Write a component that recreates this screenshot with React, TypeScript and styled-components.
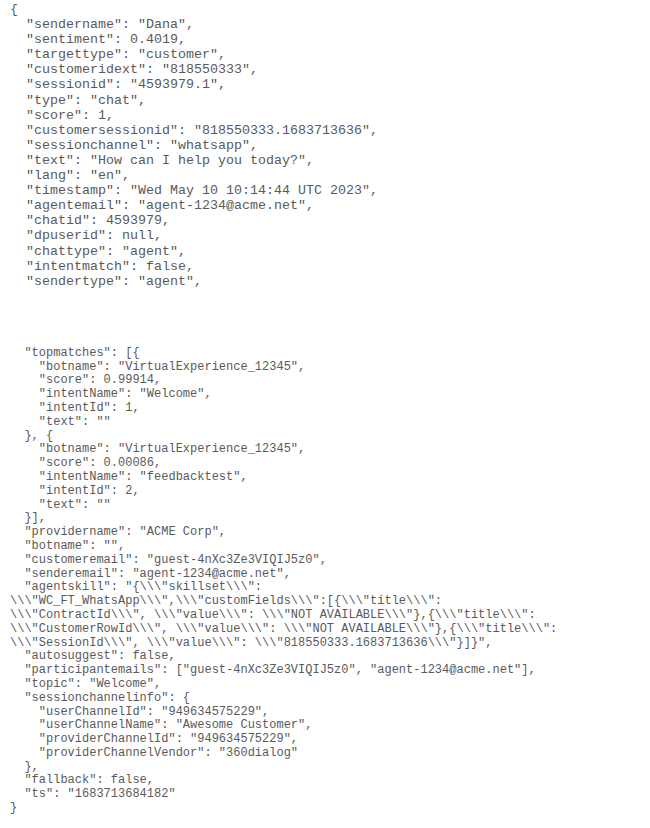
import React from "react";
import styled, { createGlobalStyle } from "styled-components";

const Global = createGlobalStyle`
  html, body { margin: 0; padding: 0; background: #ffffff; }
`;

const Page = styled.main`
  display: flex;
  flex-direction: column;
  padding: 2px 0 0 10px;
`;

const Code = styled.pre<{ $size: number; $lh: number; $gap?: number }>`
  margin: ${(p) => p.$gap ?? 0}px 0 0 0;
  font-family: "Liberation Mono", "Courier New", monospace;
  font-size: ${(p) => p.$size}px;
  line-height: ${(p) => p.$lh}px;
  color: #5a5a5a;
  white-space: pre;
`;

const head = `{
  "sendername": "Dana",
  "sentiment": 0.4019,
  "targettype": "customer",
  "customeridext": "818550333",
  "sessionid": "4593979.1",
  "type": "chat",
  "score": 1,
  "customersessionid": "818550333.1683713636",
  "sessionchannel": "whatsapp",
  "text": "How can I help you today?",
  "lang": "en",
  "timestamp": "Wed May 10 10:14:44 UTC 2023",
  "agentemail": "agent-1234@acme.net",
  "chatid": 4593979,
  "dpuserid": null,
  "chattype": "agent",
  "intentmatch": false,
  "sendertype": "agent",`;

const tail = `  "topmatches": [{
    "botname": "VirtualExperience_12345",
    "score": 0.99914,
    "intentName": "Welcome",
    "intentId": 1,
    "text": ""
  }, {
    "botname": "VirtualExperience_12345",
    "score": 0.00086,
    "intentName": "feedbacktest",
    "intentId": 2,
    "text": ""
  }],
  "providername": "ACME Corp",
  "botname": "",
  "customeremail": "guest-4nXc3Ze3VIQIJ5z0",
  "senderemail": "agent-1234@acme.net",
  "agentskill": "{\\\\\\"skillset\\\\\\":
\\\\\\"WC_FT_WhatsApp\\\\\\",\\\\\\"customFields\\\\\\":[{\\\\\\"title\\\\\\":
\\\\\\"ContractId\\\\\\", \\\\\\"value\\\\\\": \\\\\\"NOT AVAILABLE\\\\\\"},{\\\\\\"title\\\\\\":
\\\\\\"CustomerRowId\\\\\\", \\\\\\"value\\\\\\": \\\\\\"NOT AVAILABLE\\\\\\"},{\\\\\\"title\\\\\\":
\\\\\\"SessionId\\\\\\", \\\\\\"value\\\\\\": \\\\\\"818550333.1683713636\\\\\\"}]}",
  "autosuggest": false,
  "participantemails": ["guest-4nXc3Ze3VIQIJ5z0", "agent-1234@acme.net"],
  "topic": "Welcome",
  "sessionchannelinfo": {
    "userChannelId": "949634575229",
    "userChannelName": "Awesome Customer",
    "providerChannelId": "949634575229",
    "providerChannelVendor": "360dialog"
  },
  "fallback": false,
  "ts": "1683713684182"
}`;

export default function App() {
  return (
    <>
      <Global />
      <Page>
        <Code $size={13.33} $lh={15.1}>{head}</Code>
        <Code $size={12} $lh={13.8} $gap={58}>{tail}</Code>
      </Page>
    </>
  );
}
